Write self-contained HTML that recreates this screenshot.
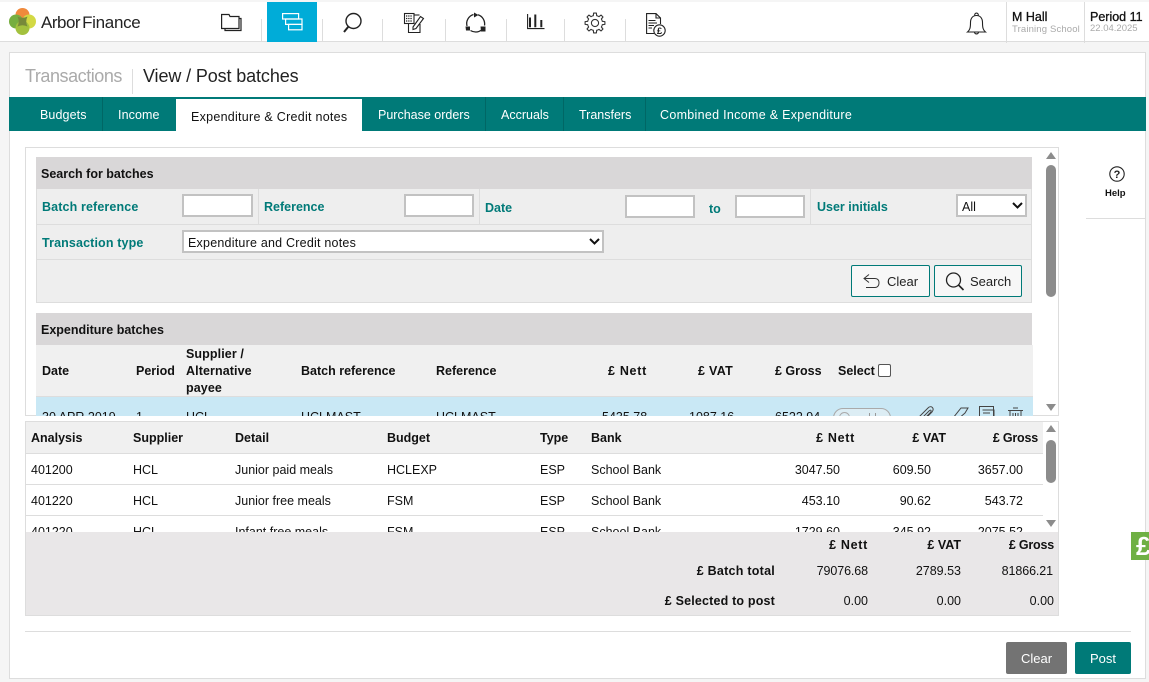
<!DOCTYPE html>
<html><head><meta charset="utf-8"><style>
html,body{margin:0;padding:0}
body{width:1149px;height:682px;position:relative;overflow:hidden;background:#f5f5f5;font:12.5px "Liberation Sans",sans-serif;color:#111}
.a{position:absolute}
.t{position:absolute;white-space:nowrap;line-height:16px;margin-top:1px}
.h{margin-top:0}
.b{font-weight:bold}
.g{color:#007a78;font-weight:bold}
.r{text-align:right}
.n{letter-spacing:.7px}
.tab{position:absolute;top:107px;color:#fff;font-size:12.5px;line-height:16px;white-space:nowrap}
.inp{position:absolute;background:#fff;border:2px solid #c2c2c2;box-sizing:border-box}
svg{position:absolute;overflow:visible;fill:none}
</style></head><body>

<!-- top bar -->
<div class="a" style="left:0;top:2px;width:1149px;height:39px;background:#fff;border-bottom:1px solid #ddd"></div>
<svg style="left:9px;top:8px" width="27" height="27" viewBox="0 0 27 27">
<circle cx="13.500" cy="7" r="7" fill="#f08a3c"/>
<circle cx="7" cy="13.500" r="7" fill="#76ae3f"/>
<circle cx="20" cy="13.500" r="7" fill="#d3d944"/>
<circle cx="13.500" cy="20" r="7" fill="#a3c13e"/>
<path d="M8.500 8.500Q13.500 11 18.500 8.500Q16 13.500 18.500 18.500Q13.500 16 8.500 18.500Q11 13.500 8.500 8.500Z" fill="#77893a"/>
</svg>
<div class="t h" style="left:41px;top:12px;font-size:17px;line-height:21px;letter-spacing:-.5px;color:#222">Arbor<span style="margin-left:2px;letter-spacing:-.3px">Finance</span></div>

<div class="a" style="left:267px;top:2px;width:50px;height:40px;background:#00acd8"></div>
<div class="a" style="left:261px;top:19px;width:1px;height:22px;background:#ddd"></div>
<div class="a" style="left:322px;top:19px;width:1px;height:22px;background:#ddd"></div>
<div class="a" style="left:382px;top:19px;width:1px;height:22px;background:#ddd"></div>
<div class="a" style="left:445px;top:19px;width:1px;height:22px;background:#ddd"></div>
<div class="a" style="left:506px;top:19px;width:1px;height:22px;background:#ddd"></div>
<div class="a" style="left:564px;top:19px;width:1px;height:22px;background:#ddd"></div>
<div class="a" style="left:625px;top:19px;width:1px;height:22px;background:#ddd"></div>

<!-- nav icons -->
<svg style="left:221px;top:13px" width="21" height="18" stroke="#222" stroke-width="1.200"><path d="M.6 3.500V1.500H8L9 3.500H18V15.500H.6Z"/><path d="M18.500 5.500H20V17.500H4V16"/></svg>
<svg style="left:282px;top:13px" width="21" height="18" stroke="#fff" stroke-width="1.200"><rect x=".6" y=".6" width="16" height="5.400"/><rect x="3.600" y="6" width="16.400" height="5.400"/><rect x="6.600" y="11.400" width="13.400" height="5.400"/></svg>
<svg style="left:343px;top:13px" width="20" height="21" stroke="#222" stroke-width="1.400"><circle cx="10.500" cy="8" r="7.500"/><path d="M5.500 13.500L1 19" stroke-width="2"/></svg>
<svg style="left:404px;top:13px" width="22" height="21" stroke="#222" stroke-width="1.100"><path d="M4.500 10.500V19.500H16V11"/><rect x=".5" y=".5" width="9.500" height="10" fill="#fff"/><path d="M2 3H8.500M2 5.500H8.500M2 8H8.500" stroke-dasharray="1.300 .9" stroke-width="1.200"/><path d="M10 2H15.500"/><path d="M9 14L16.500 3.500L19.500 5.500L12 15.500L9 16.500Z" fill="#fff"/></svg>
<svg style="left:465px;top:13px" width="21" height="21" stroke="#222" stroke-width="1.300"><path d="M2 13A9.500 9.500 0 0 1 8.500 1.500M13 1.800A9.500 9.500 0 0 1 19.500 12.500M16.500 17A9.500 9.500 0 0 1 5.500 17.500"/><path d="M9 -.5L13.500 2L9 4.500Z" fill="#222" stroke="none"/><path d="M15.500 13.500H20.500V18.500H16Z" fill="#222" stroke="none"/><path d="M.5 13.500H5V17.500H1Z" fill="#222" stroke="none"/></svg>
<svg style="left:527px;top:14px" width="18" height="16" stroke="#222"><path d="M.6 0V14.600H17.500" stroke-width="1.100"/><path d="M3 3.500V13.300M8.300 .5V13.300M14.300 6V13.300" stroke-width="2"/></svg>
<svg style="left:585px;top:13px" width="20" height="20" stroke="#333" stroke-width="1.100" stroke-linejoin="round">
<g transform="translate(10 10)">
<path d="M-2.870-6.930L-1.690-7.310L-1.390-9.900H1.390L1.690-7.310L2.870-6.930"/>
<path transform="rotate(45)" d="M-2.870-6.930L-1.690-7.310L-1.390-9.900H1.390L1.690-7.310L2.870-6.930"/>
<path transform="rotate(90)" d="M-2.870-6.930L-1.690-7.310L-1.390-9.900H1.390L1.690-7.310L2.870-6.930"/>
<path transform="rotate(135)" d="M-2.870-6.930L-1.690-7.310L-1.390-9.900H1.390L1.690-7.310L2.870-6.930"/>
<path transform="rotate(180)" d="M-2.870-6.930L-1.690-7.310L-1.390-9.900H1.390L1.690-7.310L2.870-6.930"/>
<path transform="rotate(225)" d="M-2.870-6.930L-1.690-7.310L-1.390-9.900H1.390L1.690-7.310L2.870-6.930"/>
<path transform="rotate(270)" d="M-2.870-6.930L-1.690-7.310L-1.390-9.900H1.390L1.690-7.310L2.870-6.930"/>
<path transform="rotate(315)" d="M-2.870-6.930L-1.690-7.310L-1.390-9.900H1.390L1.690-7.310L2.870-6.930"/>
<circle r="3.600"/>
</g></svg>
<svg style="left:646px;top:13px" width="21" height="21" stroke="#222" stroke-width="1.100"><path d="M8 20.500H.6V.6H10L14.500 5V11"/><path d="M10 .6V5H14.500"/><path d="M2.500 7.500H9.500M2.500 10H11M2.500 12.500H8M2.500 15H6" stroke-width="1"/><circle cx="13.500" cy="17.500" r="5.700" fill="#fff"/><text x="13.500" y="21" font-size="9.500" font-weight="bold" fill="#222" stroke="none" text-anchor="middle" font-family="Liberation Sans">£</text></svg>
<svg style="left:967px;top:12px" width="20" height="24" stroke="#222" stroke-width="1.100"><path d="M.5 20C3 18 3.500 15.500 3.500 10.500C3.500 6 6 3.500 9.500 3.500C13 3.500 15.500 6 15.500 10.500C15.500 15.500 16 18 18.500 20Z"/><path d="M7.800 3.500A1.800 1.800 0 1 1 11.200 3.500"/><path d="M7.500 20.500A2.100 2.100 0 0 0 11.500 20.500"/></svg>

<div class="a" style="left:1006px;top:2px;width:1px;height:41px;background:#ddd"></div>
<div class="a" style="left:1084px;top:2px;width:1px;height:41px;background:#ddd"></div>
<div class="t h" style="left:1012px;top:9px;font-size:12.500px;-webkit-text-stroke:.3px #111">M Hall</div>
<div class="t" style="left:1012px;top:21px;font-size:9.500px;color:#aaa;letter-spacing:.15px">Training School</div>
<div class="t h" style="left:1090px;top:9px;font-size:12.500px;-webkit-text-stroke:.3px #111">Period 11</div>
<div class="t" style="left:1090px;top:20px;font-size:9.500px;color:#aaa">22.04.2025</div>

<!-- card -->
<div class="a" style="left:9px;top:52px;width:1137px;height:627px;background:#fff;border:1px solid #ddd;box-sizing:border-box"></div>
<div class="t h" style="left:25px;top:66px;font-size:18px;line-height:20px;color:#aaa;letter-spacing:-.45px">Transactions</div>
<div class="a" style="left:132px;top:69px;width:1px;height:25px;background:#ddd"></div>
<div class="t h" style="left:143px;top:66px;font-size:18px;line-height:20px;color:#222;letter-spacing:-.12px">View / Post batches</div>

<!-- tabs -->
<div class="a" style="left:9px;top:97px;width:1137px;height:34px;background:#007a78"></div>
<div class="a" style="left:176px;top:99px;width:186px;height:32px;background:#fff"></div>
<div class="a" style="left:102px;top:97px;width:1px;height:34px;background:#006765"></div>
<div class="a" style="left:485px;top:97px;width:1px;height:34px;background:#006765"></div>
<div class="a" style="left:563px;top:97px;width:1px;height:34px;background:#006765"></div>
<div class="a" style="left:645px;top:97px;width:1px;height:34px;background:#006765"></div>
<div class="tab" style="left:40px;letter-spacing:.1px">Budgets</div>
<div class="tab" style="left:118px;letter-spacing:.1px">Income</div>
<div class="tab" style="left:191px;top:109px;color:#111;letter-spacing:.27px">Expenditure &amp; Credit notes</div>
<div class="tab" style="left:378px">Purchase orders</div>
<div class="tab" style="left:501px">Accruals</div>
<div class="tab" style="left:579px">Transfers</div>
<div class="tab" style="left:660px;letter-spacing:.3px">Combined Income &amp; Expenditure</div>

<!-- help -->
<svg style="left:1109px;top:166px" width="16" height="16" stroke="#222" stroke-width="1.100"><circle cx="8" cy="8" r="7.200"/><text x="8" y="12" font-size="11" font-weight="bold" text-anchor="middle" fill="#222" stroke="none" font-family="Liberation Sans">?</text></svg>
<div class="t b" style="left:1105px;top:185px;font-size:9.500px">Help</div>
<div class="a" style="left:1086px;top:218px;width:60px;height:1px;background:#ddd"></div>

<!-- upper panel -->
<div class="a" style="left:25px;top:147px;width:1034px;height:269px;border:1px solid #ddd;box-sizing:border-box;background:#fff"></div>
<div class="a" style="left:1046px;top:165px;width:10px;height:132px;background:#8c8c8c;border-radius:5px"></div>
<svg style="left:1046px;top:152px" width="10" height="8"><path d="M0 7L5 0L10 7Z" fill="#8c8c8c"/></svg>
<svg style="left:1046px;top:404px" width="10" height="8"><path d="M0 0L5 7L10 0Z" fill="#8c8c8c"/></svg>

<div class="a" style="left:36px;top:157px;width:996px;height:146px;background:#eee;border:solid #ddd;border-width:0 1px 1px 1px;box-sizing:border-box"></div>
<div class="a" style="left:36px;top:157px;width:996px;height:32px;background:#d9d7d8"></div>
<div class="a" style="left:36px;top:224px;width:996px;height:1px;background:#ddd"></div>
<div class="a" style="left:36px;top:259px;width:996px;height:1px;background:#ddd"></div>
<div class="a" style="left:258px;top:189px;width:1px;height:35px;background:#ddd"></div>
<div class="a" style="left:479px;top:189px;width:1px;height:35px;background:#ddd"></div>
<div class="a" style="left:810px;top:189px;width:1px;height:35px;background:#ddd"></div>
<div class="t b" style="left:41px;top:165px">Search for batches</div>
<div class="t g" style="left:42px;top:198px;letter-spacing:.13px">Batch reference</div>
<div class="t g" style="left:264px;top:198px">Reference</div>
<div class="t g" style="left:485px;top:199px">Date</div>
<div class="t g" style="left:709px;top:200px">to</div>
<div class="t g" style="left:817px;top:198px">User initials</div>
<div class="t g" style="left:42px;top:234px;letter-spacing:.13px">Transaction type</div>
<div class="inp" style="left:182px;top:194px;width:71px;height:23px"></div>
<div class="inp" style="left:404px;top:194px;width:70px;height:23px"></div>
<div class="inp" style="left:625px;top:195px;width:70px;height:23px"></div>
<div class="inp" style="left:735px;top:195px;width:70px;height:23px"></div>
<div class="inp" style="left:956px;top:194px;width:71px;height:23px"></div>
<div class="t" style="left:962px;top:198px">All</div>
<svg style="left:1012px;top:202px" width="11" height="7" stroke="#111" stroke-width="2"><path d="M1 1L5.500 5.500L10 1"/></svg>
<div class="inp" style="left:182px;top:230px;width:422px;height:23px"></div>
<div class="t" style="left:188px;top:234px;letter-spacing:.22px">Expenditure and Credit notes</div>
<svg style="left:589px;top:238px" width="11" height="7" stroke="#111" stroke-width="2"><path d="M1 1L5.500 5.500L10 1"/></svg>

<div class="a" style="left:851px;top:265px;width:79px;height:32px;background:#f7f7f7;border:1px solid #007a78;border-radius:2px;box-sizing:border-box"></div>
<div class="a" style="left:934px;top:265px;width:88px;height:32px;background:#f7f7f7;border:1px solid #007a78;border-radius:2px;box-sizing:border-box"></div>
<svg style="left:863px;top:274px" width="17" height="15" stroke="#333" stroke-width="1"><path d="M6 .5L1 4.500L6 8.500"/><path d="M1 4.500H12C15 4.500 16 6.500 16 9C16 11.500 14.500 13.500 12 13.500H3"/></svg>
<div class="t" style="left:887px;top:273px;color:#222;font-size:13px">Clear</div>
<svg style="left:945px;top:272px" width="20" height="20" stroke="#222" stroke-width="1.300"><circle cx="8.500" cy="8" r="7"/><path d="M13.500 13L18.500 18" stroke-width="1.600"/></svg>
<div class="t" style="left:970px;top:273px;color:#222;font-size:13px">Search</div>

<div class="a" style="left:36px;top:313px;width:996px;height:32px;background:#d9d7d8"></div>
<div class="t b" style="left:41px;top:321px">Expenditure batches</div>
<div class="a" style="left:36px;top:345px;width:997px;height:51px;background:#f0f0f0"></div>
<div class="a" style="left:36px;top:396px;width:997px;height:1px;background:#ddd"></div>
<div class="t b" style="left:42px;top:362px">Date</div>
<div class="t b" style="left:136px;top:362px">Period</div>
<div class="t b" style="left:186px;top:345px;line-height:17px;letter-spacing:.1px">Supplier /<br>Alternative<br>payee</div>
<div class="t b" style="left:301px;top:362px">Batch reference</div>
<div class="t b" style="left:436px;top:362px">Reference</div>
<div class="t b n" style="left:608px;top:362px">£ Nett</div>
<div class="t b" style="left:698px;top:362px;letter-spacing:.3px">£ VAT</div>
<div class="t b" style="left:775px;top:362px">£ Gross</div>
<div class="t b" style="left:838px;top:362px">Select</div>
<div class="a" style="left:878px;top:364px;width:13px;height:13px;background:#fff;border:1px solid #555;border-radius:2px;box-sizing:border-box"></div>

<div class="a" style="left:36px;top:397px;width:997px;height:19px;overflow:hidden;background:#c9e8f5">
  <div class="t" style="left:6px;top:11px">30 APR 2019</div>
  <div class="t" style="left:100px;top:11px">1</div>
  <div class="t" style="left:150px;top:11px">HCL</div>
  <div class="t" style="left:265px;top:11px">HCLMAST</div>
  <div class="t" style="left:400px;top:11px">HCLMAST</div>
  <div class="t" style="left:566px;top:11px">5435.78</div>
  <div class="t" style="left:653px;top:11px">1087.16</div>
  <div class="t" style="left:739px;top:11px">6522.94</div>
  <div class="a" style="left:797px;top:11px;width:58px;height:20px;border:1px solid #aaa;border-radius:10px;box-sizing:border-box;background:#dcedf4"></div>
  <div class="a" style="left:803px;top:15px;width:11px;height:11px;border:1px solid #aaa;border-radius:50%;box-sizing:border-box"></div>
  <div class="a" style="left:833px;top:16px;width:5px;height:3px;border-left:1px solid #999;border-right:1px solid #999"></div>
  <svg style="left:880px;top:9px" width="20" height="12" stroke="#444"><path d="M2 12L12 2C15 -1 19 2 16 6L8 14"/><path d="M6 12L13 5C15 3 16 5 14 7L8 13"/></svg>
  <svg style="left:915px;top:9px" width="20" height="12" stroke="#444"><path d="M2 12L10 2L17 2L14 7L6 14"/></svg>
  <svg style="left:943px;top:9px" width="18" height="12" stroke="#444"><rect x=".5" y=".5" width="14" height="14"/><path d="M3.500 4H15V15M4 7H11"/></svg>
  <svg style="left:971px;top:10px" width="18" height="10" stroke="#444"><path d="M1 3.500H16M3 3.500V12H14V3.500M6 1H11M6 6V10M8.500 6V10M11 6V10"/></svg>
</div>

<!-- lower panel -->
<div class="a" style="left:25px;top:421px;width:1034px;height:111px;border:1px solid #ddd;border-bottom:0;box-sizing:border-box;background:#fff"></div>
<div class="a" style="left:26px;top:422px;width:1017px;height:31px;background:#f0f0f0"></div>
<div class="a" style="left:26px;top:453px;width:1017px;height:1px;background:#ddd"></div>
<div class="a" style="left:26px;top:484px;width:1017px;height:1px;background:#ddd"></div>
<div class="a" style="left:26px;top:515px;width:1017px;height:1px;background:#ddd"></div>
<div class="a" style="left:1046px;top:440px;width:10px;height:43px;background:#8c8c8c;border-radius:5px"></div>
<svg style="left:1046px;top:425px" width="10" height="8"><path d="M0 7L5 0L10 7Z" fill="#8c8c8c"/></svg>
<svg style="left:1046px;top:520px" width="10" height="8"><path d="M0 0L5 7L10 0Z" fill="#8c8c8c"/></svg>
<div class="t b" style="left:31px;top:429px">Analysis</div>
<div class="t b" style="left:133px;top:429px">Supplier</div>
<div class="t b" style="left:235px;top:429px">Detail</div>
<div class="t b" style="left:387px;top:429px">Budget</div>
<div class="t b" style="left:540px;top:429px">Type</div>
<div class="t b" style="left:591px;top:429px">Bank</div>
<div class="t b r n" style="right:294px;top:429px">£ Nett</div>
<div class="t b r" style="right:203px;top:429px">£ VAT</div>
<div class="t b r" style="right:111px;top:429px;letter-spacing:-.2px">£ Gross</div>

<div class="t" style="left:31px;top:461px">401200</div><div class="t" style="left:133px;top:461px">HCL</div><div class="t" style="left:235px;top:461px">Junior paid meals</div><div class="t" style="left:387px;top:461px">HCLEXP</div><div class="t" style="left:540px;top:461px">ESP</div><div class="t" style="left:591px;top:461px">School Bank</div>
<div class="t r" style="right:309px;top:461px">3047.50</div><div class="t r" style="right:218px;top:461px">609.50</div><div class="t r" style="right:126px;top:461px">3657.00</div>
<div class="t" style="left:31px;top:492px">401220</div><div class="t" style="left:133px;top:492px">HCL</div><div class="t" style="left:235px;top:492px">Junior free meals</div><div class="t" style="left:387px;top:492px">FSM</div><div class="t" style="left:540px;top:492px">ESP</div><div class="t" style="left:591px;top:492px">School Bank</div>
<div class="t r" style="right:309px;top:492px">453.10</div><div class="t r" style="right:218px;top:492px">90.62</div><div class="t r" style="right:126px;top:492px">543.72</div>
<div class="t" style="left:31px;top:523px">401220</div><div class="t" style="left:133px;top:523px">HCL</div><div class="t" style="left:235px;top:523px">Infant free meals</div><div class="t" style="left:387px;top:523px">FSM</div><div class="t" style="left:540px;top:523px">ESP</div><div class="t" style="left:591px;top:523px">School Bank</div>
<div class="t r" style="right:309px;top:523px">1729.60</div><div class="t r" style="right:218px;top:523px">345.92</div><div class="t r" style="right:126px;top:523px">2075.52</div>

<!-- totals -->
<div class="a" style="left:25px;top:532px;width:1034px;height:84px;background:#e9e7e8;border:1px solid #ddd;border-top:0;box-sizing:border-box"></div>
<div class="t b r n" style="right:281px;top:536px">£ Nett</div>
<div class="t b r" style="right:188px;top:536px">£ VAT</div>
<div class="t b r" style="right:95px;top:536px;letter-spacing:-.2px">£ Gross</div>
<div class="t b r" style="right:374px;top:562px;letter-spacing:.25px">£ Batch total</div>
<div class="t r" style="right:281px;top:562px;letter-spacing:-.1px">79076.68</div>
<div class="t r" style="right:188px;top:562px">2789.53</div>
<div class="t r" style="right:96px;top:562px;letter-spacing:-.1px">81866.21</div>
<div class="t b r" style="right:374px;top:592px;letter-spacing:.18px">£ Selected to post</div>
<div class="t r" style="right:281px;top:592px">0.00</div>
<div class="t r" style="right:188px;top:592px">0.00</div>
<div class="t r" style="right:95px;top:592px">0.00</div>

<div class="a" style="left:25px;top:631px;width:1106px;height:1px;background:#ddd"></div>
<div class="a" style="left:1006px;top:642px;width:61px;height:32px;background:#737373;border-radius:2px;color:#fff;text-align:center;line-height:33px;font-size:13px">Clear</div>
<div class="a" style="left:1075px;top:642px;width:56px;height:32px;background:#007a78;border-radius:2px;color:#fff;text-align:center;line-height:33px;font-size:13px">Post</div>

<div class="a" style="left:1131px;top:532px;width:18px;height:28px;background:#6fb044;overflow:hidden;color:#fff;font-weight:bold;font-size:26px;line-height:28px;padding-left:5px;box-sizing:border-box">£</div>
</body></html>
